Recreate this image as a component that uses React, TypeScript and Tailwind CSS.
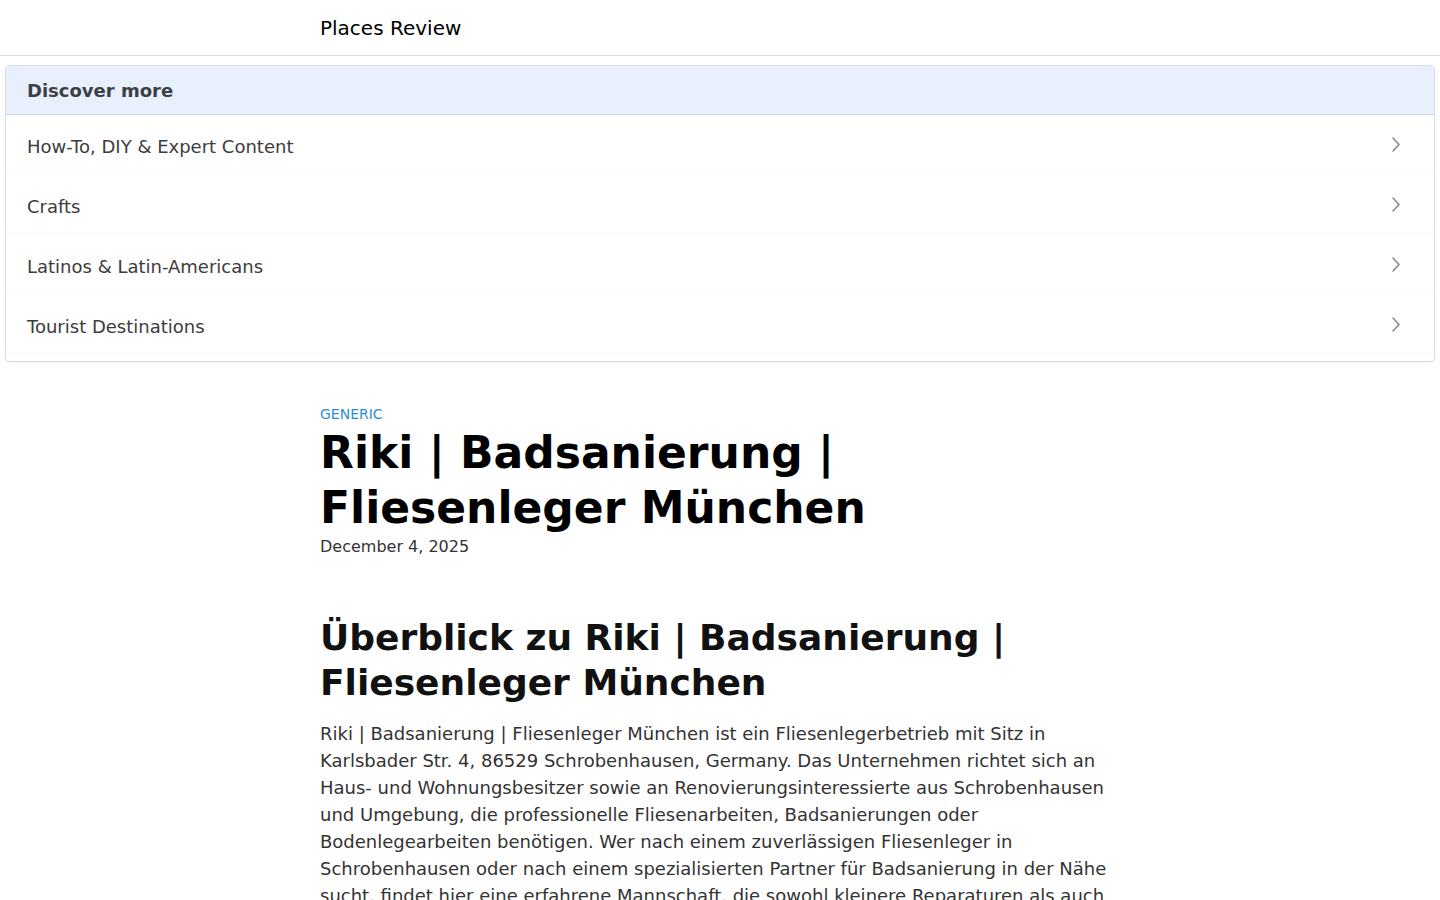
import React from 'react';

const topics = [
  'How-To, DIY & Expert Content',
  'Crafts',
  'Latinos & Latin-Americans',
  'Tourist Destinations',
];

const Chevron = () => (
  <svg width="16" height="20" viewBox="0 0 16 20" fill="none" stroke="#8a8a8a" strokeWidth="1.6" strokeLinecap="round" strokeLinejoin="round">
    <polyline points="5 3 11 9.5 5 16" />
  </svg>
);

const App: React.FC = () => {
  return (
    <div className="min-h-screen bg-white text-[#222] font-['DejaVu_Sans',sans-serif]">
      {/* Top bar */}
      <header className="h-[56px] border-b border-[#dcdcdc]">
        <div className="max-w-[800px] mx-auto h-full flex items-center">
          <span className="text-[20px] text-black">Places Review</span>
        </div>
      </header>

      {/* Discover more */}
      <div className="px-[5px] pt-[9px]">
        <div className="border border-[#dadce0] rounded-[4px] overflow-hidden shadow-[0_1px_2px_rgba(0,0,0,0.05)]">
          <div className="h-[49px] bg-[#e8f0fe] border-b border-[#d2d8e2] flex items-center px-[21px]">
            <span className="text-[18px] font-bold text-[#3c4043]">Discover more</span>
          </div>
          {topics.map((t) => (
            <div
              key={t}
              className="h-[60px] flex items-center justify-between pl-[21px] pr-[30px] shadow-[inset_0_-8px_8px_-8px_rgba(0,0,0,0.03)]"
            >
              <span className="text-[18px] text-[#3c3c3c] mt-[2px]">{t}</span>
              <Chevron />
            </div>
          ))}
          <div className="h-[6px]" />
        </div>
      </div>

      {/* Article */}
      <main className="max-w-[800px] mx-auto pt-[43px]">
        <div className="text-[14px] text-[#2b8fd6] uppercase leading-[18px]">Generic</div>
        <h1 className="text-[44px] font-bold leading-[55px] text-black mt-[2px]">
          Riki | Badsanierung | Fliesenleger München
        </h1>
        <div className="text-[16px] text-[#333] leading-[20px] mt-[2px]">December 4, 2025</div>

        <h2 className="text-[36px] font-bold leading-[45px] text-[#111] mt-[58px]">
          Überblick zu Riki | Badsanierung | Fliesenleger München
        </h2>
        <p className="text-[18px] leading-[27px] text-[#333] mt-[15px]">
          Riki | Badsanierung | Fliesenleger München ist ein Fliesenlegerbetrieb mit Sitz in Karlsbader Str. 4, 86529
          Schrobenhausen, Germany. Das Unternehmen richtet sich an Haus- und Wohnungsbesitzer sowie an
          Renovierungsinteressierte aus Schrobenhausen und Umgebung, die professionelle Fliesenarbeiten,
          Badsanierungen oder Bodenlegearbeiten benötigen. Wer nach einem zuverlässigen Fliesenleger in
          Schrobenhausen oder nach einem spezialisierten Partner für Badsanierung in der Nähe sucht, findet hier eine
          erfahrene Mannschaft, die sowohl kleinere Reparaturen als auch umfangreiche Renovierungsprojekte übernimmt.
        </p>
      </main>
    </div>
  );
};

export default App;
